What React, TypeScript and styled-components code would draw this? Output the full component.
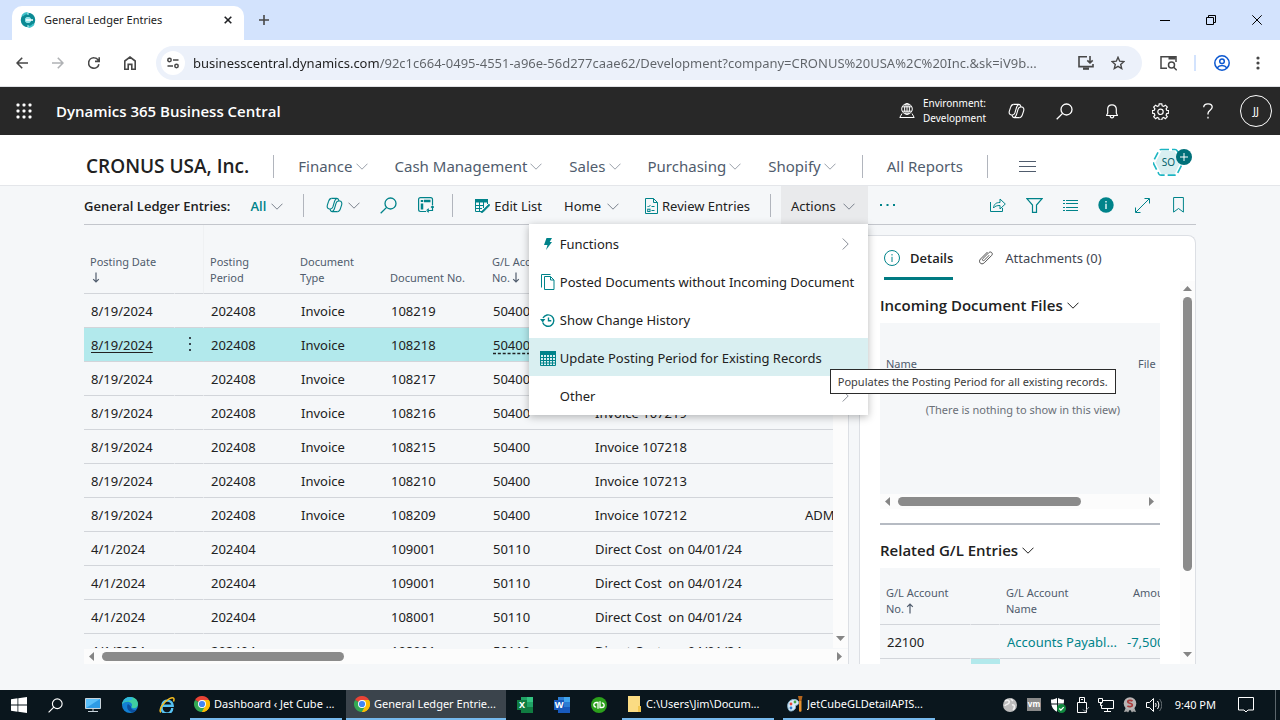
import React from "react";
import styled, { createGlobalStyle, css } from "styled-components";

const teal = "#00838a";
const ink = "#212121";
const slate = "#505c6d";
const canvas = "#f5f7f9";
const line = "#d2d5da";

const strong = css`
  font-family: "Open Sans", sans-serif;
  font-weight: 600;
`;

const GlobalStyle = createGlobalStyle`
  *, *::before, *::after { box-sizing: border-box; }
  html, body { margin: 0; padding: 0; }
  body {
    font-family: "Noto Sans", "Open Sans", sans-serif;
    font-size: 13px;
    line-height: 20px;
    color: ${ink};
    background: ${canvas};
  }
  button, input { font: inherit; color: inherit; }
  button { border: 0; padding: 0; background: none; cursor: pointer; }
  a { color: inherit; text-decoration: none; }
  h1, h2, p { margin: 0; font: inherit; }
`;

/* ---------- shell ---------- */

const Shell = styled.div`
  display: flex;
  flex-direction: column;
  height: 100vh;
  min-width: 1180px;
  overflow: hidden;
`;

const Glyph = styled.svg<{ $w?: number; $h?: number; $color?: string; $stroke?: number }>`
  display: block;
  flex: none;
  width: ${(p) => p.$w ?? 16}px;
  height: ${(p) => p.$h ?? p.$w ?? 16}px;
  color: ${(p) => p.$color ?? "inherit"};
  fill: none;
  stroke: currentColor;
  stroke-width: ${(p) => p.$stroke ?? 1};
`;

/* ---------- browser chrome ---------- */

const TabStrip = styled.div`
  flex: none;
  display: flex;
  align-items: flex-end;
  height: 40px;
  padding-left: 12px;
  background: #d3e3fd;
`;

const BrowserTab = styled.div`
  display: flex;
  align-items: center;
  width: 232px;
  height: 34px;
  padding: 0 8px 6px;
  border-radius: 10px 10px 0 0;
  background: #fff;
  font-size: 11px;
`;

const TabTitle = styled.span`
  flex: 1;
  margin-left: 8px;
`;

const ChromeButton = styled.button<{ $w?: number }>`
  display: flex;
  align-items: center;
  justify-content: center;
  flex: none;
  width: ${(p) => p.$w ?? 36}px;
  height: 28px;
  color: #474747;
`;

const NewTab = styled(ChromeButton)`
  align-self: center;
  margin-left: 2px;
`;

const WindowButtons = styled.div`
  display: flex;
  align-self: center;
  margin-left: auto;
`;

const AddressBar = styled.div`
  flex: none;
  display: flex;
  align-items: center;
  height: 47px;
  padding: 0 4px;
  border-bottom: 1px solid #dfe1e5;
  background: #fff;
`;

const AddressField = styled.label`
  flex: 1;
  display: flex;
  align-items: center;
  height: 34px;
  margin-left: 8px;
  padding: 0 8px 0 5px;
  border-radius: 17px;
  background: #ecf1fa;
`;

const SiteChip = styled.span`
  display: flex;
  align-items: center;
  justify-content: center;
  width: 24px;
  height: 24px;
  border-radius: 12px;
  background: #fff;
  color: #474747;
`;

const AddressInput = styled.input`
  flex: 1;
  min-width: 0;
  margin-left: 8px;
  padding: 0;
  border: 0;
  outline: 0;
  font-size: 13px;
  color: #474747;
  text-overflow: ellipsis;
  background: linear-gradient(90deg, #1f1f1f 186px, #5f6368 186px);
  -webkit-background-clip: text;
  background-clip: text;
  -webkit-text-fill-color: transparent;
`;

const ChromeRule = styled.span`
  width: 2px;
  height: 16px;
  margin-right: 8px;
  background: #d3e3fd;
`;

/* ---------- product header ---------- */

const ProductBar = styled.header`
  flex: none;
  display: flex;
  align-items: center;
  height: 48px;
  padding-left: 16px;
  background: #282828;
  color: #fff;
`;

const ProductName = styled.a`
  margin-left: 24px;
  font-size: 15px;
  ${strong}
`;

const Environment = styled.div`
  display: flex;
  align-items: center;
  gap: 8px;
  margin-left: auto;
  margin-right: 6px;
  font-size: 10px;
  line-height: 15px;
`;

const ProductButton = styled.button`
  display: flex;
  align-items: center;
  justify-content: center;
  width: 48px;
  height: 48px;
`;

const Avatar = styled.span`
  display: flex;
  align-items: center;
  justify-content: center;
  width: 32px;
  height: 32px;
  border: 1px solid #fff;
  border-radius: 16px;
  font-size: 11px;
`;

/* ---------- role centre navigation ---------- */

const RoleNav = styled.nav`
  flex: none;
  display: flex;
  align-items: center;
  height: 51px;
  padding: 12px 84px 0 86px;
  border-bottom: 1px solid #e4e6ea;
  background: #fff;
`;

const Company = styled.h1`
  ${strong}
  font-size: 19px;
  line-height: 26px;
  white-space: nowrap;
`;

const Divider = styled.span<{ $before?: number; $after?: number }>`
  flex: none;
  width: 1px;
  height: 23px;
  margin: 0 ${(p) => p.$after ?? 24}px 0 ${(p) => p.$before ?? 24}px;
  background: #b1b5bd;
`;

const RoleMenu = styled.div`
  display: flex;
  gap: 27px;
  margin-right: 2px;
`;

const RoleLink = styled.button`
  display: flex;
  align-items: center;
  gap: 3px;
  font-size: 15px;
  line-height: 24px;
  color: ${slate};
  white-space: nowrap;
`;

const MoreLinks = styled(RoleLink)`
  padding-left: 7px;
`;

const BadgeButton = styled.button`
  position: relative;
  margin: -8px 4px 0 auto;
`;

const BadgeLabel = styled.span`
  position: absolute;
  inset: 0 8px 0 0;
  display: flex;
  align-items: center;
  justify-content: center;
  font-size: 10px;
  color: #00606a;
`;

/* ---------- command bar ---------- */

const Page = styled.main`
  flex: 1;
  min-height: 0;
  display: flex;
  flex-direction: column;
  padding: 0 84px 26px;
`;

const CommandBar = styled.div`
  flex: none;
  display: flex;
  align-items: center;
  height: 39px;
  border-bottom: 1px solid #c3c6cc;
`;

const PageTitle = styled.h2`
  ${strong}
  padding-top: 2px;
  white-space: nowrap;
`;

const Command = styled.button<{ $ml?: number; $gap?: number; $accent?: boolean }>`
  display: flex;
  align-items: center;
  gap: ${(p) => p.$gap ?? 4}px;
  height: 38px;
  margin-left: ${(p) => p.$ml ?? 0}px;
  padding-top: 2px;
  white-space: nowrap;
  ${(p) => p.$accent && css`color: ${teal}; ${strong}`}
`;

const IconOnly = styled(Command)`
  padding-top: 0;
`;

const ActionsAnchor = styled.div`
  position: relative;
  z-index: 2;
`;

const ActionsButton = styled(Command)`
  gap: 7px;
  padding: 2px 13px 0 10px;
  background: #e9eaec;
`;

const CommandIcons = styled.div`
  display: flex;
  margin-left: auto;
`;

const IconCommand = styled.button`
  display: flex;
  align-items: center;
  justify-content: center;
  width: 36px;
  height: 38px;
  color: ${teal};
`;

const Menu = styled.div`
  position: absolute;
  top: 100%;
  right: 0;
  min-width: 339px;
  padding-bottom: 1px;
  background: #fff;
  box-shadow: 0 2px 8px rgba(0, 0, 0, 0.28);
`;

const MenuItem = styled.button<{ $active?: boolean }>`
  position: relative;
  display: flex;
  align-items: center;
  width: 100%;
  height: 38px;
  padding: 2px 8px 0 11px;
  text-align: left;
  white-space: nowrap;
  background: ${(p) => (p.$active ? "#d9eff1" : "#fff")};
`;

const MenuIcon = styled.span`
  display: flex;
  align-items: center;
  justify-content: center;
  width: 16px;
  margin-right: 4px;
  color: ${teal};
`;

const MenuText = styled.span`
  flex: 1;
`;

const Tooltip = styled.span`
  position: absolute;
  z-index: 3;
  top: 31px;
  left: 301px;
  padding: 0 7px;
  border: 1px solid #2b2b2b;
  background: #fff;
  font-size: 11px;
  line-height: 23px;
  color: #3b3b3b;
`;

/* ---------- scroll bars ---------- */

const Track = styled.div<{ $vertical?: boolean }>`
  flex: none;
  display: flex;
  flex-direction: ${(p) => (p.$vertical ? "column" : "row")};
  align-items: center;
  ${(p) => (p.$vertical ? "width: 15px; padding: 3px 0 5px;" : "height: 15px; padding: 0 4px 0 3px;")}
  background: #fcfcfc;
`;

const Thumb = styled.div<{ $vertical?: boolean; $share: number }>`
  border-radius: 5px;
  background: #8b8b8b;
  ${(p) =>
    p.$vertical
      ? `width: 9px; height: ${p.$share}%; margin: 4px 0 auto;`
      : `height: 9px; width: ${p.$share}%; margin: 0 auto 0 6px;`}
`;

type Direction = "up" | "down" | "left" | "right";
const arrows: Record<Direction, string> = {
  up: "M4.500 2L9 7H0z",
  down: "M4.500 7L9 2H0z",
  left: "M2 4.500L7 0V9z",
  right: "M7 4.500L2 0V9z",
};

const Arrow = ({ to }: { to: Direction }) => (
  <Glyph $w={9} viewBox="0 0 9 9" $color="#858585" aria-hidden="true">
    <path d={arrows[to]} fill="currentColor" stroke="none" />
  </Glyph>
);

/* ---------- ledger list ---------- */

const Content = styled.div`
  flex: 1;
  min-height: 0;
  display: flex;
  gap: 10px;
`;

const ListPane = styled.section`
  flex: 1;
  min-width: 0;
  display: flex;
  flex-direction: column;
  gap: 1px;
  border-right: 1px solid #dcdfe4;
`;

const ListBody = styled.div`
  flex: 1;
  min-height: 0;
  display: flex;
`;

const TableClip = styled.div`
  flex: 1;
  min-width: 0;
  overflow: hidden;
`;

const BodyTrack = styled(Track)`
  margin-top: 69px;
`;

const Table = styled.table`
  width: 100%;
  table-layout: fixed;
  border-collapse: separate;
  border-spacing: 0;
`;

const HeadCell = styled.th<{ $split?: string; $height?: number; $indent?: number }>`
  height: ${(p) => p.$height ?? 69}px;
  padding: 0 4px 7px ${(p) => p.$indent ?? 6}px;
  border-bottom: 1px solid ${line};
  ${(p) => p.$split && `border-right: 1px solid ${p.$split};`}
  vertical-align: bottom;
  text-align: left;
  font-size: 11px;
  font-weight: 400;
  line-height: 16px;
  color: ${slate};
  white-space: nowrap;
`;

const HeadArrow = styled(Glyph)`
  display: inline-block;
  vertical-align: -1px;
  margin-left: 2px;
`;

const Cell = styled.td<{ $split?: boolean; $active?: boolean }>`
  height: 34px;
  padding: 0 0 0 7px;
  border-bottom: 1px solid ${line};
  ${(p) => p.$split && `border-right: 1px solid ${p.$active ? "#b2e9ec" : canvas};`}
  background: ${(p) => (p.$active ? "#b2e9ec" : "transparent")};
  white-space: pre;
  overflow: hidden;
`;

const DateLink = styled.a<{ $active?: boolean }>`
  ${(p) => p.$active && "text-decoration: underline; text-underline-offset: 2px;"}
`;

const AccountLink = styled.a<{ $active?: boolean }>`
  ${(p) => p.$active && "text-decoration: underline dashed; text-underline-offset: 3px;"}
`;

const RowMenu = styled.button`
  display: block;
  margin-left: 6px;
`;

/* ---------- fact box ---------- */

const FactBox = styled.aside`
  flex: none;
  display: flex;
  flex-direction: column;
  width: 337px;
  margin-top: 10px;
  border: 1px solid #dcdfe4;
  border-bottom: 0;
  border-radius: 8px 8px 0 0;
  background: #fff;
`;

const FactTabs = styled.div`
  flex: none;
  display: flex;
  gap: 26px;
  height: 45px;
  padding-left: 24px;
`;

const FactTab = styled.button<{ $active?: boolean }>`
  display: flex;
  align-items: center;
  gap: ${(p) => (p.$active ? 10 : 12)}px;
  height: 44px;
  padding-top: 2px;
  border-bottom: 3px solid ${(p) => (p.$active ? "#007a82" : "transparent")};
  ${(p) => p.$active && strong}
  color: ${(p) => (p.$active ? ink : "#3f4652")};
`;

const FactScroll = styled.div`
  flex: 1;
  min-height: 0;
  display: flex;
`;

const FactParts = styled.div`
  flex: 1;
  min-width: 0;
  overflow: hidden;
  padding: 13px 20px 0;
`;

const PartTitle = styled.button`
  display: flex;
  align-items: center;
  gap: 4px;
  height: 22px;
  ${strong}
  font-size: 15px;
`;

const FileGrid = styled.div`
  height: 171px;
  margin-top: 7px;
  overflow: hidden;
  background: ${canvas};
`;

const FileTable = styled(Table)`
  th { height: 54px; padding-bottom: 5px; border-bottom: 0; }
`;

const EmptyNote = styled.p`
  margin-top: 23px;
  padding-right: 40px;
  text-align: right;
  font-size: 11px;
  color: #6a6f77;
  white-space: nowrap;
`;

const PartRule = styled.hr`
  height: 2px;
  margin: 14px 0;
  border: 0;
  background: #b6bbc3;
`;

const RelatedGrid = styled.div`
  margin-top: 7px;
  overflow: hidden;
  background: ${canvas};
`;

const RelatedLink = styled.a`
  color: ${teal};
`;

/* ---------- task bar ---------- */

const TaskBar = styled.footer`
  flex: none;
  display: flex;
  align-items: center;
  height: 30px;
  background: #0a161d;
  color: #fff;
`;

const TaskIcon = styled.button`
  display: flex;
  align-items: center;
  justify-content: center;
  width: 37px;
  height: 30px;
`;

const TaskButton = styled.button<{ $active?: boolean; $ml?: number }>`
  display: flex;
  align-items: center;
  gap: 4px;
  width: ${(p) => (p.$active ? 160 : 152)}px;
  height: 30px;
  margin-left: ${(p) => p.$ml ?? 5}px;
  padding: 0 4px 0 ${(p) => (p.$active ? 8 : 4)}px;
  border-bottom: 2px solid #76b9ed;
  background: ${(p) => (p.$active ? "#3b444c" : "transparent")};
  font-size: 11px;
  white-space: nowrap;
`;

const TaskText = styled.span`
  overflow: hidden;
  text-overflow: ellipsis;
`;

const Tray = styled.div`
  display: flex;
  align-items: center;
  gap: 8px;
  margin-left: auto;
  font-size: 11px;
  white-space: nowrap;
`;

const Clock = styled.time`
  margin: 0 14px 0 5px;
`;

const ShowDesktop = styled.span`
  width: 5px;
  height: 30px;
  margin-left: 13px;
  border-left: 1px solid #5c666c;
`;

/* ---------- icons ---------- */

const Chevron = ({ w = 12, color = "#7b828d" }: { w?: number; color?: string }) => (
  <Glyph $w={w} $h={7} viewBox="0 0 12 7" $color={color} aria-hidden="true">
    <path d="M.5.7L6 6.200 11.500.7" />
  </Glyph>
);

const SubmenuMark = styled(Glyph)`
  margin-right: 11px;
`;

const ChevronEast = () => (
  <SubmenuMark $w={7} $h={12} viewBox="0 0 7 12" $color="#8a8f98" aria-hidden="true">
    <path d="M.7.5L6.200 6 .7 11.500" />
  </SubmenuMark>
);

const SortArrow = ({ up }: { up?: boolean }) => (
  <HeadArrow $w={8} $h={11} viewBox="0 0 8 11" $color={slate} $stroke={1.2} aria-hidden="true">
    <path d={up ? "M4 10.500V1M1.200 3.800L4 1l2.800 2.800" : "M4 .5V10M1.200 7.200L4 10l2.800-2.800"} />
  </HeadArrow>
);

const Copilot = ({ w = 18 }: { w?: number }) => (
  <Glyph $w={w} $h={w - 1} viewBox="0 0 18 17" $stroke={1.2} aria-hidden="true">
    <path d="M6 1.500h5.500c1.200 0 1.600.8 1.900 1.700l.3 1.100M12 15.500H6.500c-1.200 0-1.600-.8-1.900-1.700l-.3-1.100" />
    <path d="M6 1.500C4 1.500 3.200 3 2.700 4.700l-1.300 4C.8 10.900 1.600 12.700 3.500 12.700h1.300c1.400 0 2-.8 2.500-2.200L9.200 4.200c.5-1.500 1-2.500 2.300-2.500" />
    <path d="M12 15.500c2 0 2.800-1.500 3.300-3.200l1.300-4c.6-2.200-.2-4-2.100-4h-1.300c-1.400 0-2 .8-2.500 2.200l-1.900 6.300c-.5 1.500-1 2.500-2.300 2.500" />
  </Glyph>
);

const Search = ({ w = 17, color }: { w?: number; color?: string }) => (
  <Glyph $w={w} viewBox="0 0 17 17" $stroke={1.3} $color={color} aria-hidden="true">
    <circle cx="10.500" cy="6.500" r="5.500" />
    <path d="M6.600 10.400L.7 16.300" />
  </Glyph>
);

const ChromeLogo = () => (
  <Glyph viewBox="0 0 16 16" aria-hidden="true">
    <g stroke="none">
      <path d="M8 8L1.070 4a8 8 0 0113.860 0z" fill="#ea4335" />
      <path d="M8 8l6.930-4A8 8 0 018 16z" fill="#fbbc04" />
      <path d="M8 16A8 8 0 011.070 4L8 8l2.500 3.500z" fill="#34a853" />
      <path d="M8 4h6.930A8 8 0 018 16l3.460-6z" fill="#fbbc04" />
      <circle cx="8" cy="8" r="4" fill="#fff" />
      <circle cx="8" cy="8" r="3.100" fill="#4285f4" />
    </g>
  </Glyph>
);

const OfficeLogo = ({ dark, mid, light, letter }: Record<"dark" | "mid" | "light" | "letter", string>) => (
  <Glyph viewBox="0 0 16 16" aria-hidden="true">
    <g stroke="none">
      <path d="M4 0h12v16H4z" fill={mid} />
      <path d="M10 0h6v5h-6z" fill={light} />
      <path d="M4 10h12v6H4z" fill={dark} />
      <path d="M0 3h10v10H0z" fill={dark} />
      <text x="5" y="11.200" textAnchor="middle" fontSize="9" fontWeight="700" fill="#fff">
        {letter}
      </text>
    </g>
  </Glyph>
);

/* ---------- data ---------- */

const entries = [
  ["8/19/2024", "202408", "Invoice", "108219", "50400", "Invoice 107222", ""],
  ["8/19/2024", "202408", "Invoice", "108218", "50400", "Invoice 107221", ""],
  ["8/19/2024", "202408", "Invoice", "108217", "50400", "Invoice 107220", ""],
  ["8/19/2024", "202408", "Invoice", "108216", "50400", "Invoice 107219", ""],
  ["8/19/2024", "202408", "Invoice", "108215", "50400", "Invoice 107218", ""],
  ["8/19/2024", "202408", "Invoice", "108210", "50400", "Invoice 107213", ""],
  ["8/19/2024", "202408", "Invoice", "108209", "50400", "Invoice 107212", "ADM"],
  ["4/1/2024", "202404", "", "109001", "50110", "Direct Cost  on 04/01/24", ""],
  ["4/1/2024", "202404", "", "109001", "50110", "Direct Cost  on 04/01/24", ""],
  ["4/1/2024", "202404", "", "108001", "50110", "Direct Cost  on 04/01/24", ""],
  ["4/1/2024", "202404", "", "108001", "50110", "Direct Cost  on 04/01/24", ""],
];

const selected = 1;

/* ---------- sections ---------- */

const BrowserChrome = () => (
  <>
    <TabStrip>
      <BrowserTab>
        <Glyph viewBox="0 0 16 16" aria-hidden="true">
          <circle cx="8" cy="8" r="5" stroke="#0b8a94" strokeWidth="4.500" />
          <path d="M2.200 4A7 7 0 018 1M13.800 12A7 7 0 018 15" stroke="#3fc1c9" strokeWidth="1.800" />
          <path d="M8 0v3M8 13v3" stroke="#c8f2f4" strokeWidth="1" />
          <circle cx="8" cy="8" r="3" fill="#8fe3e8" stroke="none" />
          <path d="M6 8h7" stroke="#fff" strokeWidth="1.500" />
        </Glyph>
        <TabTitle>General Ledger Entries</TabTitle>
        <ChromeButton $w={16} aria-label="Close tab">
          <Glyph $w={8} viewBox="0 0 8 8" $stroke={1.6} $color="#202124">
            <path d="M.7.7l6.600 6.600M7.300.7L.7 7.300" />
          </Glyph>
        </ChromeButton>
      </BrowserTab>
      <NewTab aria-label="New tab">
        <Glyph $w={10} viewBox="0 0 10 10" $stroke={1.6}>
          <path d="M5 0v10M0 5h10" />
        </Glyph>
      </NewTab>
      <WindowButtons>
        {[
          ["Minimize", "M0 5.500h10"],
          ["Restore", "M.5 2.500h7v7h-7zM2.500 2.500v-2h7v7h-2"],
          ["Close", "M.3.3l9.400 9.400M9.700.3L.3 9.700"],
        ].map(([label, d]) => (
          <ChromeButton key={label} $w={46} aria-label={label}>
            <Glyph $w={10} viewBox="0 0 10 10" $color="#000">
              <path d={d} />
            </Glyph>
          </ChromeButton>
        ))}
      </WindowButtons>
    </TabStrip>
    <AddressBar>
      <ChromeButton aria-label="Back">
        <Glyph $w={12} viewBox="0 0 12 12" $stroke={1.6}>
          <path d="M12 6H1M6.200.7L1 6l5.200 5.300" />
        </Glyph>
      </ChromeButton>
      <ChromeButton aria-label="Forward">
        <Glyph $w={12} viewBox="0 0 12 12" $stroke={1.6} $color="#b0b2b5">
          <path d="M0 6h11M5.800.7L11 6l-5.200 5.300" />
        </Glyph>
      </ChromeButton>
      <ChromeButton aria-label="Reload">
        <Glyph $w={12} viewBox="0 0 12 12" $stroke={1.6}>
          <path d="M10.900 7.200A5.200 5.200 0 116 .8c2 0 3.400 1 4.600 2.700M11.200.2V4.400H7" />
        </Glyph>
      </ChromeButton>
      <ChromeButton aria-label="Home">
        <Glyph $w={12} $h={14} viewBox="0 0 12 14" $stroke={1.6}>
          <path d="M.8 13.200V5L6 1l5.200 4v8.200H7.800V8.400H4.200v4.800z" />
        </Glyph>
      </ChromeButton>
      <AddressField>
        <SiteChip>
          <Glyph $w={12} viewBox="0 0 12 12" $stroke={1.5}>
            <circle cx="2.500" cy="3" r="1.700" />
            <path d="M6 3h5.500M.5 9H6" />
            <circle cx="9.500" cy="9" r="1.700" />
          </Glyph>
        </SiteChip>
        <AddressInput
          aria-label="Address"
          readOnly
          value="businesscentral.dynamics.com/92c1c664-0495-4551-a96e-56d277caae62/Development?company=CRONUS%20USA%2C%20Inc.&sk=iV9b..."
        />
        <ChromeButton $w={32} aria-label="Install app">
          <Glyph viewBox="0 0 16 14" $h={14} $stroke={1.6}>
            <path d="M9 .8H1v9.800h14V8M12 0v7M9.300 4.400L12 7l2.700-2.600" />
            <path d="M5 12.600h6" strokeWidth="2.400" />
          </Glyph>
        </ChromeButton>
        <ChromeButton $w={32} aria-label="Bookmark this tab">
          <Glyph $w={14} viewBox="0 0 14 14" $stroke={1.4}>
            <path d="M7 1.300l1.700 3.900 4.200.4-3.200 2.800 1 4.100L7 10.300l-3.700 2.200 1-4.100L1.100 5.600l4.200-.4z" />
          </Glyph>
        </ChromeButton>
      </AddressField>
      <ChromeButton $w={52} aria-label="Search this page">
        <Glyph $w={17} $h={15} viewBox="0 0 17 15" $stroke={1.5}>
          <path d="M7 12.200H1V.8h15V6" />
          <path d="M8.500 2h7" strokeWidth="3" />
          <circle cx="11.500" cy="9" r="3" />
          <path d="M13.700 11.200l3 3" />
        </Glyph>
      </ChromeButton>
      <ChromeRule />
      <ChromeButton aria-label="Profile">
        <Glyph $w={16} viewBox="0 0 16 16" $stroke={1.5} $color="#0b57d0">
          <circle cx="8" cy="8" r="7.200" />
          <circle cx="8" cy="6.200" r="2.300" />
          <path d="M3 13c1.300-1.800 3-2.600 5-2.600s3.700.8 5 2.600" />
        </Glyph>
      </ChromeButton>
      <ChromeButton aria-label="Browser menu">
        <Glyph $w={4} $h={14} viewBox="0 0 4 14">
          <g fill="currentColor" stroke="none">
            <circle cx="2" cy="2" r="1.600" />
            <circle cx="2" cy="7" r="1.600" />
            <circle cx="2" cy="12" r="1.600" />
          </g>
        </Glyph>
      </ChromeButton>
    </AddressBar>
  </>
);

const ProductHeader = () => (
  <ProductBar>
    <button aria-label="App launcher">
      <Glyph viewBox="0 0 16 16">
        <g fill="#fff" stroke="none">
          {[2, 8, 14].map((x) => [2, 8, 14].map((y) => <rect key={`${x}${y}`} x={x - 1.5} y={y - 1.5} width="3" height="3" rx="1" />))}
        </g>
      </Glyph>
    </button>
    <ProductName href="#">Dynamics 365 Business Central</ProductName>
    <Environment>
      <Glyph viewBox="0 0 16 16">
        <circle cx="8" cy="6" r="5.300" />
        <ellipse cx="8" cy="6" rx="2.400" ry="5.300" />
        <path d="M3.300 3.800h9.400M3.300 8.200h9.400M8 .7v10.600" />
        <path d="M3 10.500L.8 14.500h14.400L13 10.500" />
      </Glyph>
      <span>
        Environment:
        <br />
        Development
      </span>
    </Environment>
    <ProductButton aria-label="Copilot"><Copilot w={17} /></ProductButton>
    <ProductButton aria-label="Search"><Search /></ProductButton>
    <ProductButton aria-label="Notifications">
      <Glyph $w={12} $h={15} viewBox="0 0 12 15" $stroke={1.2}>
        <path d="M.5 11.500h11L10.300 9.200V5C10.300 2.500 8.500.8 6 .8S1.700 2.500 1.700 5v4.200zM4.200 11.700c.1 2.800 3.500 2.800 3.600 0" />
      </Glyph>
    </ProductButton>
    <ProductButton aria-label="Settings">
      <Glyph $w={17} viewBox="0 0 17 17" $stroke={1.2}>
        <path d="M7.200.8h2.600l.4 2 1.500.6 1.700-1.200 1.900 1.900-1.200 1.700.6 1.500 2 .3v2.600l-2 .4-.6 1.500 1.200 1.700-1.900 1.900-1.700-1.200-1.500.6-.4 2H7.200l-.4-2-1.500-.6-1.700 1.200-1.900-1.900 1.200-1.700-.6-1.500-2-.4V7.600l2-.3.6-1.500L1.700 4.100l1.900-1.900 1.700 1.200 1.500-.6z" />
        <circle cx="8.500" cy="8.800" r="2.700" />
      </Glyph>
    </ProductButton>
    <ProductButton aria-label="Help">
      <Glyph $w={10} $h={16} viewBox="0 0 10 16" $stroke={1.3}>
        <path d="M.7 4.300C.8 2.200 2.500.8 5 .8s4.200 1.300 4.200 3.300C9.200 7.200 5 7.300 5 10.500v1M5 13.700v1.800" />
      </Glyph>
    </ProductButton>
    <ProductButton aria-label="Account"><Avatar>JJ</Avatar></ProductButton>
  </ProductBar>
);

const RoleNavigation = () => (
  <RoleNav>
    <Company>CRONUS USA, Inc.</Company>
    <Divider />
    <RoleMenu>
      {["Finance", "Cash Management", "Sales", "Purchasing", "Shopify"].map((name) => (
        <RoleLink key={name}>
          {name}
          <Chevron color="#9aa0aa" />
        </RoleLink>
      ))}
    </RoleMenu>
    <Divider />
    <RoleLink as="a" href="#">All Reports</RoleLink>
    <Divider />
    <MoreLinks aria-label="Show more">
      <Glyph $w={17} $h={11} viewBox="0 0 17 11" $color={slate}>
        <path d="M0 .5h17M0 5.500h17M0 10.500h17" />
      </Glyph>
    </MoreLinks>
    <BadgeButton aria-label="Role badge">
      <Glyph $w={39} $h={29} viewBox="0 0 39 29">
        <path d="M8.500 3h13l6 11.500-6 11.500h-13l-6-11.500z" fill="#d9eff1" stroke="none" />
        <path d="M8 1.500h14c1 0 1.700.4 2.200 1.300l5 9.700c.6 1.200.6 2.400 0 3.600l-5 9.700c-.5.900-1.200 1.300-2.200 1.300H8c-1 0-1.700-.4-2.200-1.300l-5-9.700c-.6-1.200-.6-2.400 0-3.600l5-9.700C6.300 1.900 7 1.500 8 1.500z" stroke="#1cb5c2" strokeWidth="1.600" strokeDasharray="8 3" />
        <circle cx="31" cy="9" r="8" fill="#007079" stroke="none" />
        <path d="M31 5v8M27 9h8" stroke="#fff" />
      </Glyph>
      <BadgeLabel>SO</BadgeLabel>
    </BadgeButton>
  </RoleNav>
);

const ActionsMenu = () => (
  <Menu role="menu">
    <MenuItem role="menuitem">
      <MenuIcon>
        <Glyph $w={8} $h={12} viewBox="0 0 8 12"><path d="M2.500 0H8L5.700 4H8L2 12l1.500-5H0z" fill="currentColor" stroke="none" /></Glyph>
      </MenuIcon>
      <MenuText>Functions</MenuText>
      <ChevronEast />
    </MenuItem>
    <MenuItem role="menuitem">
      <MenuIcon>
        <Glyph $w={14} $h={16} viewBox="0 0 14 16">
          <path d="M3.500 2.500h6l3.500 3.500v9.500H3.500zM9.500 2.500V6H13M.5 13.500V.5h9" />
        </Glyph>
      </MenuIcon>
      <MenuText>Posted Documents without Incoming Document</MenuText>
    </MenuItem>
    <MenuItem role="menuitem">
      <MenuIcon>
        <Glyph $w={15} $h={13} viewBox="0 0 15 13" $stroke={1.4}>
          <path d="M3 4a5.700 5.700 0 11-.3 4.500M8.500 3.500v3.300h2.800" />
          <path d="M0 5h5.400L2.700 8.600z" fill="currentColor" stroke="none" />
        </Glyph>
      </MenuIcon>
      <MenuText>Show Change History</MenuText>
    </MenuItem>
    <MenuItem role="menuitem" $active>
      <MenuIcon>
        <Glyph $w={16} $h={15} viewBox="0 0 16 15">
          <path d="M0 0h16v4H0z" fill="currentColor" stroke="none" />
          <path d="M.5 3.500v11h15v-11M3.500 4v11M6.500 4v11M9.500 4v11M12.500 4v11M0 6.500h16M0 9.500h16M0 12h16" />
        </Glyph>
      </MenuIcon>
      <MenuText>Update Posting Period for Existing Records</MenuText>
      <Tooltip role="tooltip">Populates the Posting Period for all existing records.</Tooltip>
    </MenuItem>
    <MenuItem role="menuitem">
      <MenuIcon />
      <MenuText>Other</MenuText>
      <ChevronEast />
    </MenuItem>
  </Menu>
);

const Commands = () => (
  <CommandBar>
    <PageTitle>General Ledger Entries:</PageTitle>
    <Command $accent $ml={20} $gap={5}>All<Chevron /></Command>
    <Divider $before={20} $after={22} />
    <IconOnly $accent $gap={5} aria-label="Copilot"><Copilot w={17} /><Chevron /></IconOnly>
    <IconOnly $accent $ml={20} aria-label="Search"><Search /></IconOnly>
    <IconOnly $accent $ml={21} aria-label="Analyze">
      <Glyph $w={16} viewBox="0 0 16 16" $stroke={1.2}>
        <path d="M8 14.500H2.500c-1.200 0-1.900-.7-1.900-1.900V2.500C.6 1.300 1.300.6 2.500.6h10.100c1.200 0 1.900.7 1.900 1.900V8" />
        <path d="M4 3v2M6 4h6.500M4 6.500v6" strokeWidth="2.500" />
        <path d="M14.500 9.500v4H10M8.800 13.500l2-1.800M8.800 13.500l2 1.800M13 10.500l1.500-1.500 1.400 1.500" />
      </Glyph>
    </IconOnly>
    <Divider $before={18} $after={22} />
    <Command>
      <Glyph $w={15} $h={14} viewBox="0 0 15 14" $color={teal}>
        <path d="M0 0h13v3.500H0z" fill="currentColor" stroke="none" />
        <path d="M.5 3v9.500H7M12.500 3v2M4.500 3v9.500M8.500 3v6M0 6.500h9M0 9.500h7" />
        <path d="M14 5l-7 7-1 2 2-.7 7-7z" fill="currentColor" strokeWidth=".6" />
      </Glyph>
      Edit List
    </Command>
    <Command $ml={22} $gap={6}>Home<Chevron /></Command>
    <Command $ml={26}>
      <Glyph $w={13} $h={16} viewBox="0 0 13 16" $color={teal}>
        <path d="M.5.5h8l4 4v11H.5zM8.500.5v4h4M6.500 12.500h3M6.500 8.500h3" />
        <path d="M2.500 8l1 1 2-2" />
        <rect x="2.700" y="11.200" width="2.300" height="2.300" />
      </Glyph>
      Review Entries
    </Command>
    <Divider $before={20} $after={10} />
    <ActionsAnchor>
      <ActionsButton aria-haspopup="menu" aria-expanded="true">Actions<Chevron /></ActionsButton>
      <ActionsMenu />
    </ActionsAnchor>
    <IconOnly $accent $ml={12} aria-label="More options">
      <Glyph $w={16} $h={4} viewBox="0 0 16 4">
        <path d="M0 1h2v2H0zM6.500 1h2v2h-2zM13 1h2v2h-2z" fill="currentColor" stroke="none" />
      </Glyph>
    </IconOnly>
    <CommandIcons>
      <IconCommand aria-label="Share">
        <Glyph $w={16} $h={14} viewBox="0 0 16 14">
          <path d="M.5 4v9.500h12V10M3.500 10C4 6 6 4.500 10 4.500V1l5.300 5-5.300 5V7.500C7 7.500 5 8 3.500 10z" />
        </Glyph>
      </IconCommand>
      <IconCommand aria-label="Filter">
        <Glyph $w={17} $h={15} viewBox="0 0 17 15" $stroke={1.2}>
          <path d="M.9.7h15.200L10.500 7v7.300h-4V7z" />
        </Glyph>
      </IconCommand>
      <IconCommand aria-label="List view">
        <Glyph $w={15} $h={11} viewBox="0 0 15 11">
          <path d="M0 .5h2M3 .5h12M0 3.500h2M3 3.500h12M0 7.500h2M3 7.500h12M0 10.500h2M3 10.500h12" />
        </Glyph>
      </IconCommand>
      <IconCommand aria-label="Details pane">
        <Glyph $w={16} viewBox="0 0 16 16">
          <circle cx="8" cy="8" r="7.700" fill="currentColor" stroke="none" />
          <path d="M8 4v1.500M8 6.800V12" stroke="#d9eff1" strokeWidth="1.500" />
        </Glyph>
      </IconCommand>
      <IconCommand aria-label="Expand">
        <Glyph $w={15} viewBox="0 0 15 15">
          <path d="M1 14L14 1M9.500.5h5v5M.5 9.500v5h5" />
        </Glyph>
      </IconCommand>
      <IconCommand aria-label="Bookmark">
        <Glyph $w={11} $h={16} viewBox="0 0 11 16">
          <path d="M.6.5h9.800v14.600l-4.900-3.600-4.900 3.600z" />
        </Glyph>
      </IconCommand>
    </CommandIcons>
  </CommandBar>
);

const LedgerList = () => (
  <ListPane>
    <ListBody>
      <TableClip>
        <Table>
          <colgroup>
            {[91, 29, 90, 90, 102, 102, 210].map((w, i) => <col key={i} style={{ width: w }} />)}
            <col />
          </colgroup>
          <thead>
            <tr>
              <HeadCell $split={canvas}>Posting Date<br /><SortArrow /></HeadCell>
              <HeadCell as="td" $split="#eff1f3" />
              <HeadCell>Posting<br />Period</HeadCell>
              <HeadCell>Document<br />Type</HeadCell>
              <HeadCell>Document No.</HeadCell>
              <HeadCell>G/L Account<br />No.<SortArrow /></HeadCell>
              <HeadCell>Description</HeadCell>
              <HeadCell />
            </tr>
          </thead>
          <tbody>
            {entries.map((entry, i) => {
              const active = i === selected;
              return (
                <tr key={i}>
                  <Cell $active={active} $split><DateLink href="#" $active={active}>{entry[0]}</DateLink></Cell>
                  <Cell $active={active} $split>
                    {active && (
                      <RowMenu aria-label="Row options">
                        <Glyph $w={4} $h={15} viewBox="0 0 4 15">
                          <path d="M1 0h2v2H1zM1 6h2v2H1zM1 12h2v2H1z" fill="#37474f" stroke="none" />
                        </Glyph>
                      </RowMenu>
                    )}
                  </Cell>
                  <Cell $active={active}>{entry[1]}</Cell>
                  <Cell $active={active}>{entry[2]}</Cell>
                  <Cell $active={active}>{entry[3]}</Cell>
                  <Cell $active={active}><AccountLink href="#" $active={active}>{entry[4]}</AccountLink></Cell>
                  <Cell $active={active}>{entry[5]}</Cell>
                  <Cell $active={active}>{entry[6]}</Cell>
                </tr>
              );
            })}
          </tbody>
        </Table>
      </TableClip>
      <BodyTrack $vertical>
        <Arrow to="up" />
        <Thumb $vertical $share={20} />
        <Arrow to="down" />
      </BodyTrack>
    </ListBody>
    <Track>
      <Arrow to="left" />
      <Thumb $share={32} />
      <Arrow to="right" />
    </Track>
  </ListPane>
);

const FactPane = () => (
  <FactBox>
    <FactTabs>
      <FactTab $active>
        <Glyph $w={16} viewBox="0 0 16 16" $color={teal}>
          <circle cx="8" cy="8" r="7.500" />
          <path d="M8 4v1.500M8 6.800V12" />
        </Glyph>
        Details
      </FactTab>
      <FactTab>
        <Glyph $w={14} viewBox="0 0 14 15" $h={15} $color="#505050">
          <path d="M10.500 5L5.300 10.200c-1.200 1.200-2.700-.3-1.500-1.500l6-6c2-2 4.800.7 2.800 2.800l-7.300 7.300c-2.900 2.900-6.600-.9-3.800-3.800L8.500 2" />
        </Glyph>
        Attachments (0)
      </FactTab>
    </FactTabs>
    <FactScroll>
      <FactParts>
        <PartTitle>Incoming Document Files<Chevron color={ink} /></PartTitle>
        <FileGrid>
          <FileTable>
            <colgroup><col /><col style={{ width: 28 }} /></colgroup>
            <thead>
              <tr>
                <HeadCell>Name</HeadCell>
                <HeadCell>File</HeadCell>
              </tr>
            </thead>
          </FileTable>
          <EmptyNote>(There is nothing to show in this view)</EmptyNote>
        </FileGrid>
        <Track>
          <Arrow to="left" />
          <Thumb $share={67} />
          <Arrow to="right" />
        </Track>
        <PartRule />
        <PartTitle>Related G/L Entries<Chevron color={ink} /></PartTitle>
        <RelatedGrid>
          <Table>
            <colgroup>
              {[91, 29, 120].map((w, i) => <col key={i} style={{ width: w }} />)}
              <col />
            </colgroup>
            <thead>
              <tr>
                <HeadCell $height={57} $split={canvas}>G/L Account<br />No.<SortArrow up /></HeadCell>
                <HeadCell $height={57} $split={canvas} as="td" />
                <HeadCell $height={57}>G/L Account<br />Name</HeadCell>
                <HeadCell $height={57} $indent={13}>Amount<br />&nbsp;</HeadCell>
              </tr>
            </thead>
            <tbody>
              <tr>
                <Cell $split>22100</Cell>
                <Cell $split />
                <Cell><RelatedLink href="#">Accounts Payabl...</RelatedLink></Cell>
                <Cell><RelatedLink href="#">-7,500.00</RelatedLink></Cell>
              </tr>
              <tr>
                <Cell />
                <Cell $active />
                <Cell />
                <Cell />
              </tr>
            </tbody>
          </Table>
        </RelatedGrid>
      </FactParts>
      <Track $vertical>
        <Arrow to="up" />
        <Thumb $vertical $share={73} />
        <Arrow to="down" />
      </Track>
    </FactScroll>
  </FactBox>
);

const WindowsTaskBar = () => (
  <TaskBar>
    <TaskIcon aria-label="Start">
      <Glyph $w={16} viewBox="0 0 16 16">
        <path d="M0 2.200l6.500-.9v6.300H0zM7.300 1.200L16 0v7.600H7.300zM0 8.400h6.500v6.300L0 13.800zM7.300 8.400H16V16l-8.700-1.200z" fill="#fff" stroke="none" />
      </Glyph>
    </TaskIcon>
    <TaskIcon aria-label="Search"><Search w={15} color="#fff" /></TaskIcon>
    <TaskIcon aria-label="This PC">
      <Glyph viewBox="0 0 16 16">
        <path d="M.5 1.500h15v10H.5z" fill="#5cc0fa" stroke="#c9d3da" />
        <path d="M1 11l14-9v9z" fill="#2e9be6" stroke="none" />
        <path d="M8 12v2M3 14.500h10" stroke="#c9d3da" />
      </Glyph>
    </TaskIcon>
    <TaskIcon aria-label="Edge">
      <Glyph viewBox="0 0 16 16">
        <g stroke="none">
          <circle cx="8" cy="8" r="8" fill="#1380d3" />
          <path d="M0 7.500C.8 3 4 0 8.200 0 12.800 0 16 3.200 16 6.900c0 2.600-2 4.300-4.300 4.300-2 0-2.800-.9-2-1.900C11 7 8.500 4.800 5.600 4.800 3 4.800.9 6 0 7.500z" fill="#3fd0a0" />
          <path d="M0 7.500C.8 3 4 0 8.200 0c2 0 3 .8 2 2.500-1.200 2-8.200.5-10.200 5z" fill="#2fb7dc" />
          <path d="M6 7c-2 2.500-.5 8 5 8.400 1.500-.3 3-1.500 3.800-2.900-3.300 1.500-6.300-.5-6-3.200z" fill="#0b4f9e" />
        </g>
      </Glyph>
    </TaskIcon>
    <TaskIcon aria-label="Internet Explorer">
      <Glyph viewBox="0 0 16 16">
        <path d="M13.200 11A5.300 5.300 0 113.200 8.800h10.500A5.200 5.200 0 008.400 3.600a5.200 5.200 0 00-5 4" stroke="#57c3f3" strokeWidth="2.400" />
        <path d="M2 15.300C-1 13 5 4.500 10.500 1.700c4-2 5.300-.3 4 2.800" stroke="#f5bd20" strokeWidth="1.500" />
      </Glyph>
    </TaskIcon>
    <TaskButton><ChromeLogo /><TaskText>Dashboard ‹ Jet Cube ...</TaskText></TaskButton>
    <TaskButton $active $ml={4}><ChromeLogo /><TaskText>General Ledger Entrie...</TaskText></TaskButton>
    <TaskIcon aria-label="Excel"><OfficeLogo dark="#107c41" mid="#21a366" light="#33c481" letter="X" /></TaskIcon>
    <TaskIcon aria-label="Word"><OfficeLogo dark="#185abd" mid="#2b7cd3" light="#41a5ee" letter="W" /></TaskIcon>
    <TaskIcon aria-label="QuickBooks">
      <Glyph viewBox="0 0 16 16">
        <circle cx="8" cy="8" r="8" fill="#2ca01c" stroke="none" />
        <path d="M7 11.700V5.500H5.200a2.300 2.300 0 000 4.700M9 4.300v6.200h1.800a2.300 2.300 0 000-4.700" stroke="#fff" strokeWidth="1.300" />
      </Glyph>
    </TaskIcon>
    <TaskButton>
      <Glyph viewBox="0 0 16 16">
        <path d="M2 0h12v10l1 1v5H2z" fill="#fbdc83" stroke="none" />
        <path d="M12 10h3v6h-3z" fill="#f2c64f" stroke="none" />
      </Glyph>
      <TaskText>C:\Users\Jim\Docum...</TaskText>
    </TaskButton>
    <TaskButton $ml={9}>
      <Glyph viewBox="0 0 16 16">
        <path d="M1 12C-.5 6 4 3 8 3.500c4 .5 4.500 4 3 5s-3 .5-2.500 2.500S6 15 4 15s-2.500-1-3-3z" fill="#d8ecf8" stroke="#8bb8d4" />
        <g stroke="none">
          <circle cx="4" cy="8" r="1.400" fill="#e5473c" />
          <circle cx="8" cy="6" r="1.400" fill="#47a94b" />
          <circle cx="4" cy="12" r="1.400" fill="#2d7dd2" />
          <path d="M12 5h2.500v10c0 1-2.500 1-2.500 0z" fill="#e8912d" />
          <path d="M11 0h4.500l-1 5h-2.500z" fill="#b5651d" />
        </g>
      </Glyph>
      <TaskText>JetCubeGLDetailAPIS...</TaskText>
    </TaskButton>
    <Tray>
      <Glyph viewBox="0 0 16 16" $color="#cfcfcf">
        <circle cx="8" cy="8" r="7" fill="#bdbdbd" stroke="none" />
        <path d="M3 4c3-2 5 0 4 2s-4 1-4 3M10 8c3-1 3 3 1 5M9 2l2 2" stroke="#f0f0f0" strokeWidth="1.600" />
      </Glyph>
      <Glyph viewBox="0 0 16 16">
        <path d="M1 1h14v13H1z" fill="#8a8a8a" stroke="none" />
        <text x="8" y="10" textAnchor="middle" fontSize="8" fontWeight="700" fill="#fff" stroke="none">vm</text>
      </Glyph>
      <Glyph viewBox="0 0 16 16">
        <path d="M1 2.500c2.500 0 4.500-.6 6.500-2 2 1.400 4 2 6.500 2 0 6-1 10-6.500 12.500C2 12.500 1 8.500 1 2.500z" fill="#fff" stroke="none" />
        <path d="M7.500 0v15M1 7h13" stroke="#0a161d" />
        <circle cx="11.500" cy="11.500" r="4.500" fill="#10893e" stroke="none" />
        <path d="M9.300 11.500l1.600 1.600 2.800-3" stroke="#fff" strokeWidth="1.300" />
      </Glyph>
      <Glyph viewBox="0 0 16 16">
        <path d="M5.500 5V.5h5V5M3.500 5.500h9v10h-9zM7 2.500h2" />
        <path d="M9 12.500l2 2 4-4.500" stroke="#9da3a7" />
      </Glyph>
      <Glyph viewBox="0 0 16 16">
        <path d="M3.500 3.500h12v8h-12zM9.500 11.500v3M6 14.500h7" />
        <path d="M.5 1.500h4v4h-4zM2.500 5.500v3h2" fill="#0a161d" />
      </Glyph>
      <Glyph viewBox="0 0 16 16">
        <path d="M4 10l-2 5 3-.5 1 1 2-3 2 3 1-1 3 .5-2-5" fill="#a8a8a8" stroke="none" />
        <circle cx="8" cy="6.500" r="6.300" fill="#b9b4b4" stroke="none" />
        <path d="M10.500 4.200C9 2.800 5.600 3.200 5.800 5c.2 1.600 4.600 1 4.600 3.100 0 1.900-3.600 2-5 .7" stroke="#a93b3b" strokeWidth="1.700" />
      </Glyph>
      <Glyph viewBox="0 0 16 16">
        <path d="M.5 5.500h3l4-4v13l-4-4h-3zM9.500 6c.8 1.300.8 2.700 0 4M11.500 4c1.800 2.500 1.800 5.500 0 8" />
        <path d="M13.500 2c3 3.800 3 8.200 0 12" stroke="#6c7479" />
      </Glyph>
      <Clock>9:40 PM</Clock>
      <Glyph viewBox="0 0 16 16">
        <path d="M.5.500h15v12.500H10L8 15l-2-2H.5z" />
      </Glyph>
      <ShowDesktop />
    </Tray>
  </TaskBar>
);

export default function App() {
  return (
    <Shell>
      <GlobalStyle />
      <BrowserChrome />
      <ProductHeader />
      <RoleNavigation />
      <Page>
        <Commands />
        <Content>
          <LedgerList />
          <FactPane />
        </Content>
      </Page>
      <WindowsTaskBar />
    </Shell>
  );
}
